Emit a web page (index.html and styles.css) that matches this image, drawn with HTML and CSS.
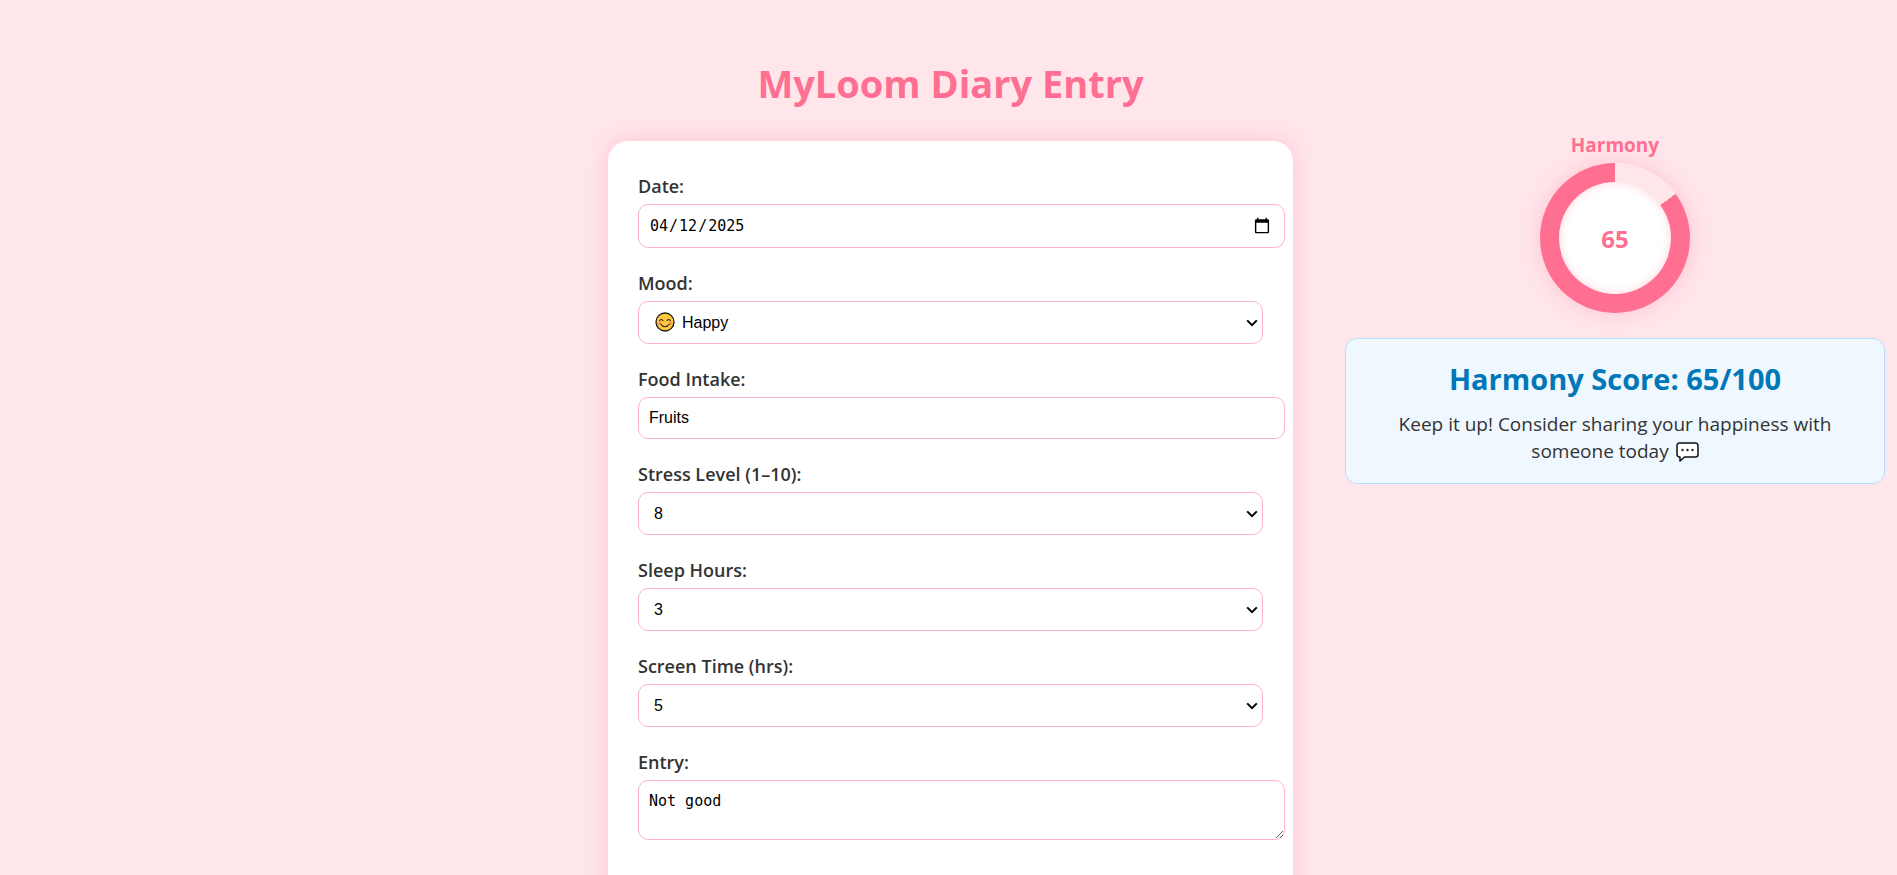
FILE: index.html
```html
<!DOCTYPE html>
<html lang="en-US">
<head>
<meta charset="utf-8">
<title>MyLoom Diary Entry</title>
<link rel="stylesheet" href="styles.css">
</head>
<body>
<main class="page">
  <section class="diary">
    <h1 class="title">MyLoom Diary Entry</h1>
    <form class="card">
      <div class="field">
        <label for="date">Date:</label>
        <input class="control date" type="date" id="date" value="2025-04-12">
      </div>
      <div class="field">
        <label for="mood">Mood:</label>
        <div class="mood">
          <select class="control mood-select" id="mood"><option>Happy</option></select>
          <svg class="smile" viewBox="0 0 20 20" aria-hidden="true">
            <circle cx="10" cy="10" r="9" fill="#ffc83d" stroke="#1b1b1b" stroke-width="1.3"/>
            <circle cx="4.7" cy="11.4" r="1.8" fill="#f8835f" opacity=".75"/>
            <circle cx="15.3" cy="11.4" r="1.8" fill="#f8835f" opacity=".75"/>
            <path d="M4.6 8.6q1.6-2.2 3.4 0M12 8.6q1.8-2.2 3.4 0M5.8 12.3c1.9 3.2 6.5 3.2 8.4 0" fill="none" stroke="#3b2a1a" stroke-width="1.1" stroke-linecap="round"/>
          </svg>
        </div>
      </div>
      <div class="field">
        <label for="food">Food Intake:</label>
        <input class="control" type="text" id="food" value="Fruits">
      </div>
      <div class="field">
        <label for="stress">Stress Level (1–10):</label>
        <select class="control" id="stress"><option>8</option></select>
      </div>
      <div class="field">
        <label for="sleep">Sleep Hours:</label>
        <select class="control" id="sleep"><option>3</option></select>
      </div>
      <div class="field">
        <label for="screen">Screen Time (hrs):</label>
        <select class="control" id="screen"><option>5</option></select>
      </div>
      <div class="field">
        <label for="entry">Entry:</label>
        <textarea class="control entry" id="entry" rows="2">Not good</textarea>
      </div>
    </form>
  </section>
  <aside class="results">
    <div class="harmony">Harmony</div>
    <div class="ring"><div class="ring-value">65</div></div>
    <div class="score">
      <h2>Harmony Score: 65/100</h2>
      <p>Keep it up! Consider sharing your happiness with someone today
        <svg class="bubble" viewBox="0 0 23 20" aria-hidden="true">
          <path d="M3.500 1h16a2.500 2.500 0 0 1 2.500 2.500v9a2.500 2.500 0 0 1-2.500 2.500H8.500L4 19v-4h-.5A2.500 2.500 0 0 1 1 12.500v-9A2.500 2.500 0 0 1 3.500 1z" fill="#fff" stroke="#111" stroke-width="1.500" stroke-linejoin="round"/>
          <g fill="#222"><circle cx="6.500" cy="8" r="1.200"/><circle cx="11.500" cy="8" r="1.200"/><circle cx="16.500" cy="8" r="1.200"/></g>
        </svg>
      </p>
    </div>
  </aside>
</main>
</body>
</html>
```
FILE: styles.css
```css
html {
  scrollbar-width: none;
}

body {
  margin: 0;
  background: #ffe6eb;
  color: #333;
  font-family: "Segoe UI", "Open Sans", "Noto Sans", sans-serif;
}

.page {
  display: grid;
  grid-template-columns: minmax(0, 1fr) 685px minmax(0, 1fr);
  column-gap: 52px;
  padding: 55px 12px 0 16px;
}

.diary {
  grid-column: 2;
}

.title {
  margin: 0 0 30px;
  color: #ff6f91;
  font-size: 38px;
  line-height: 56px;
  text-align: center;
}

.card {
  padding: 30px 30px 60px;
  border-radius: 20px;
  background: #fff;
  box-shadow: 0 0 20px rgba(255, 111, 145, 0.3);
}

.field {
  display: flex;
  flex-direction: column;
  align-items: flex-start;
  gap: 3px;
  margin-bottom: 20px;
}

.field label {
  font-size: 18px;
  font-weight: 600;
  line-height: 30px;
}

.control {
  box-sizing: content-box;
  width: 100%;
  margin: 0;
  padding: 10px;
  border: 1px solid #ffb3c6;
  border-radius: 10px;
  background: #fff;
  color: #000;
  font-family: "Liberation Sans", Arial, sans-serif;
  font-size: 16px;
  line-height: 20px;
}

input.control {
  height: 20px;
}

select.control {
  box-sizing: border-box;
  height: 43px;
  padding-left: 15px;
  appearance: none;
  background: #fff url("data:image/svg+xml,%3Csvg xmlns='http://www.w3.org/2000/svg' width='12' height='8' viewBox='0 0 12 8'%3E%3Cpath d='M1.2 1.4 6 6.200 10.800 1.400' fill='none' stroke='black' stroke-width='2'/%3E%3C/svg%3E") no-repeat right 4px center;
}

input.date {
  height: 22px;
  font-family: "DejaVu Sans Mono", monospace;
  font-size: 15px;
}

.date::-webkit-calendar-picker-indicator {
  width: 18px;
  height: 18px;
  margin-right: 1px;
}

textarea.entry {
  height: 38px;
  font-family: "DejaVu Sans Mono", monospace;
  font-size: 15px;
  resize: vertical;
}

.mood {
  position: relative;
  width: 100%;
}

.mood .mood-select {
  display: block;
  padding-left: 43px;
}

.smile {
  position: absolute;
  top: 11px;
  left: 17px;
  width: 20px;
  height: 20px;
  pointer-events: none;
}

.results {
  grid-column: 3;
  padding-top: 76px;
  text-align: center;
}

.harmony {
  margin-bottom: 4px;
  color: #ff6f91;
  font-size: 19px;
  font-weight: 700;
  line-height: 28px;
}

.ring {
  display: grid;
  place-items: center;
  width: 150px;
  height: 150px;
  margin: 0 auto 25px;
  border-radius: 50%;
  background: conic-gradient(#ffe6eb 0 15%, #ff6f91 15% 100%);
  box-shadow: 0 0 20px rgba(255, 111, 145, 0.3);
}

.ring-value {
  display: grid;
  place-items: center;
  width: 112px;
  height: 112px;
  border-radius: 50%;
  background: #fff;
  box-shadow: inset 0 0 10px rgba(255, 111, 145, 0.3);
  color: #ff6f91;
  font-size: 24px;
  font-weight: 700;
}

.score {
  padding: 20px 20px 18px;
  border: 1px solid #b3e0ff;
  border-radius: 12px;
  background: #f0f8ff;
}

.score h2 {
  margin: 0 0 12px;
  color: #0077b6;
  font-size: 29px;
  line-height: 40px;
}

.score p {
  margin: 0 20px;
  font-size: 19px;
  line-height: 27px;
}

.bubble {
  width: 23px;
  height: 20px;
  margin-left: 2px;
  vertical-align: -4px;
}
```
